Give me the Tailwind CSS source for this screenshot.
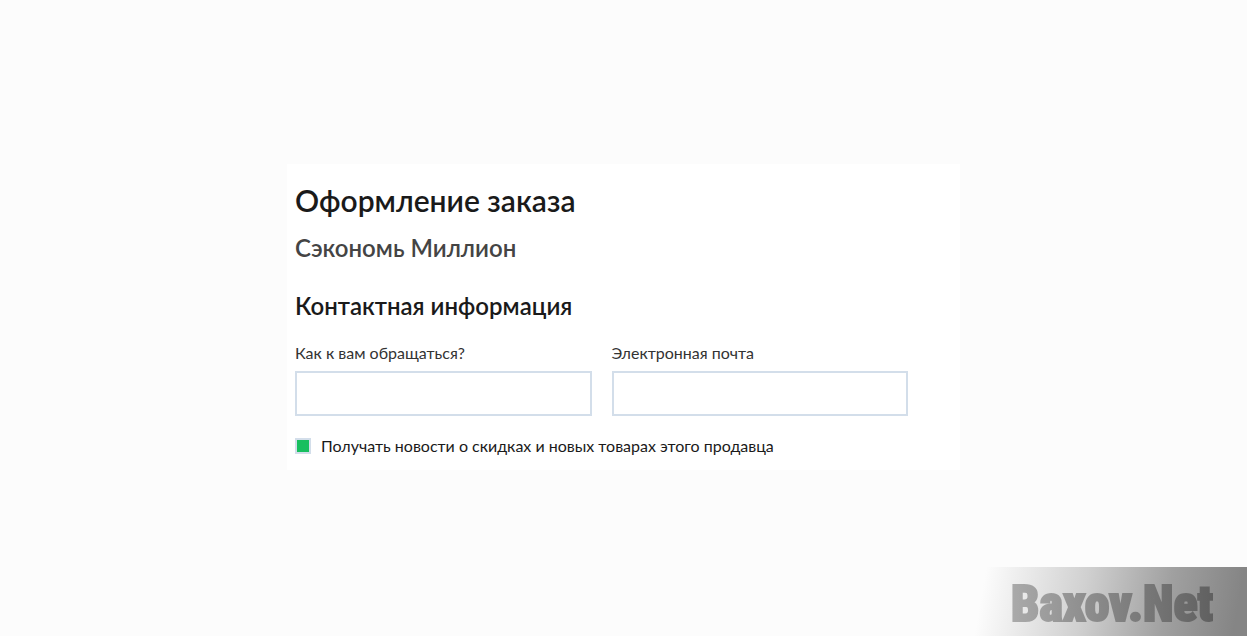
<!DOCTYPE html>
<html lang="ru">

<head>
    <meta charset="UTF-8">
    <meta name="viewport" content="width=device-width, initial-scale=1.0">
    <title>Оформление заказа</title>
    <script src="https://cdn.jsdelivr.net/npm/@tailwindcss/browser@4"></script>
</head>

<body class="bg-[#fcfcfc] font-['Lato',sans-serif] text-[#1a1a1a]">

    <main class="min-h-screen pb-[2px] flex items-center justify-center">
        <form class="w-full max-w-[673px] bg-white pl-2 pr-[52px] pt-4 pb-3">
            <h1 class="text-[30px] leading-10 font-semibold">Оформление заказа</h1>
            <h2 class="mt-3 text-2xl leading-8 font-semibold text-[#444]">Сэкономь Миллион</h2>
            <h2 class="mt-[26px] text-2xl leading-8 font-semibold">Контактная информация</h2>

            <div class="mt-[19px] grid grid-cols-2 gap-5">
                <div>
                    <label for="name" class="block text-base leading-6 text-[#333]">Как к вам обращаться?</label>
                    <input type="text" id="name" class="mt-[6px] block w-full h-[45px] px-3 bg-white border-2 border-[#d3deea]">
                </div>
                <div>
                    <label for="email" class="block text-base leading-6 text-[#333]">Электронная почта</label>
                    <input type="email" id="email" class="mt-[6px] block w-full h-[45px] px-3 bg-white border-2 border-[#d3deea]">
                </div>
            </div>

            <div class="mt-[18px] flex items-center gap-[10px]">
                <input type="checkbox" id="news" checked class="appearance-none size-4 bg-white border-2 border-[#d3deea] checked:bg-[#18bf5f]">
                <label for="news" class="text-base leading-6">Получать новости о скидках и новых товарах этого продавца</label>
            </div>
        </form>
    </main>

    <div class="fixed bottom-0 right-0 w-[272px] h-[69px] pl-9 pt-1 flex items-center bg-linear-[100deg,#fcfcfc_4%,#d0d0d0_40%,#a0a0a0_70%,#858585_95%]">
        <span class="font-['Impact','Roboto_Condensed',sans-serif] text-[50px] leading-none font-black bg-linear-to-r from-[#aaa] to-[#606060] bg-clip-text text-transparent [-webkit-text-stroke:2px_transparent]">Baxov.Net</span>
    </div>

</body>

</html>
